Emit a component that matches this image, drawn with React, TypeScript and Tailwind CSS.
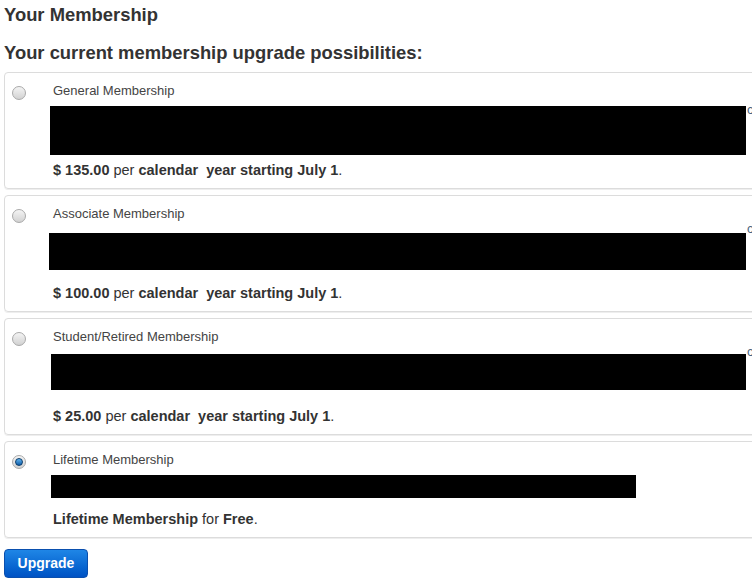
import React, { useState } from 'react';

interface Plan {
    id: string;
    label: string;
    // black redaction block over the description
    boxClass: string;
    priceClass: string;
    tailClass: string;
    cut: boolean;
    price?: string;
}

const plans: Plan[] = [
    { id: 'general', label: 'General Membership', boxClass: 'mt-[7px] h-[49px] ml-[-3px] w-[696px]', priceClass: 'mt-[7px]', tailClass: 'mt-[3px]', cut: true, price: '135.00' },
    { id: 'associate', label: 'Associate Membership', boxClass: 'mt-[11px] h-[37px] ml-[-4px] w-[697px]', priceClass: 'mt-[15px]', tailClass: 'mt-[-1px]', cut: true, price: '100.00' },
    { id: 'student', label: 'Student/Retired Membership', boxClass: 'mt-[9px] h-[36px] ml-[-2px] w-[695px]', priceClass: 'mt-[18px]', tailClass: 'mt-[-1px]', cut: true, price: '25.00' },
    { id: 'lifetime', label: 'Lifetime Membership', boxClass: 'mt-[7px] h-[23px] ml-[-2px] w-[585px]', priceClass: 'mt-[13px]', tailClass: '', cut: false },
];

const Radio: React.FC<{ checked: boolean }> = ({ checked }) => (
    <span className="flex h-[14px] w-[14px] items-center justify-center rounded-full border border-[#a9a9a9] bg-gradient-to-b from-[#f4f4f4] to-[#d2d2d2]">
        {checked && (
            <span className="h-[8px] w-[8px] rounded-full border border-[#0b3c6a] bg-gradient-to-b from-[#5fb4ef] to-[#0a5ca8]" />
        )}
    </span>
);

export default function App() {
    const [selected, setSelected] = useState('lifetime');

    return (
        <div className="h-[588px] w-[752px] overflow-hidden bg-white px-[4px] font-['Liberation_Sans',Arial,sans-serif] text-[#333]">
            <h1 className="pt-[4px] text-[18.4px] font-bold leading-[22px] text-[#333]">Your Membership</h1>
            <h2 className="mt-[16px] text-[18.4px] font-bold leading-[22px] text-[#333]">Your current membership upgrade possibilities:</h2>

            <div className="mt-[8px] flex w-[790px] flex-col gap-[6px]">
                {plans.map(plan => (
                    <div
                        key={plan.id}
                        onClick={() => setSelected(plan.id)}
                        className="flex rounded-[4px] border border-[#dcdcdc] pb-[10px] pt-[10px] shadow-[0_1px_0_#eee]"
                    >
                        <div className="pl-[7px] pt-[3px]">
                            <Radio checked={selected === plan.id} />
                        </div>
                        <div className="ml-[27px] flex flex-col">
                            <div className="text-[13px] leading-[16px] text-[#444]">{plan.label}</div>
                            <div className="flex items-start">
                                <div className={`bg-black ${plan.boxClass}`} />
                                {plan.cut && <span className={`ml-[1px] text-[13px] leading-[16px] text-[#4a6480] ${plan.tailClass}`}>c</span>}
                            </div>
                            <div className={`text-[14.5px] leading-[16px] text-[#333] ${plan.priceClass}`}>
                                {plan.price ? (
                                    <>
                                        <b>$ {plan.price}</b> per <b>calendar&nbsp; year starting July 1</b>.
                                    </>
                                ) : (
                                    <>
                                        <b>Lifetime Membership</b> for <b>Free</b>.
                                    </>
                                )}
                            </div>
                        </div>
                    </div>
                ))}
            </div>

            <button className="mt-[11px] h-[29px] w-[84px] rounded-[4px] border border-[#0a4fae] bg-gradient-to-b from-[#1f86e6] to-[#0052c4] text-[14px] font-bold text-white">
                Upgrade
            </button>
        </div>
    );
}
